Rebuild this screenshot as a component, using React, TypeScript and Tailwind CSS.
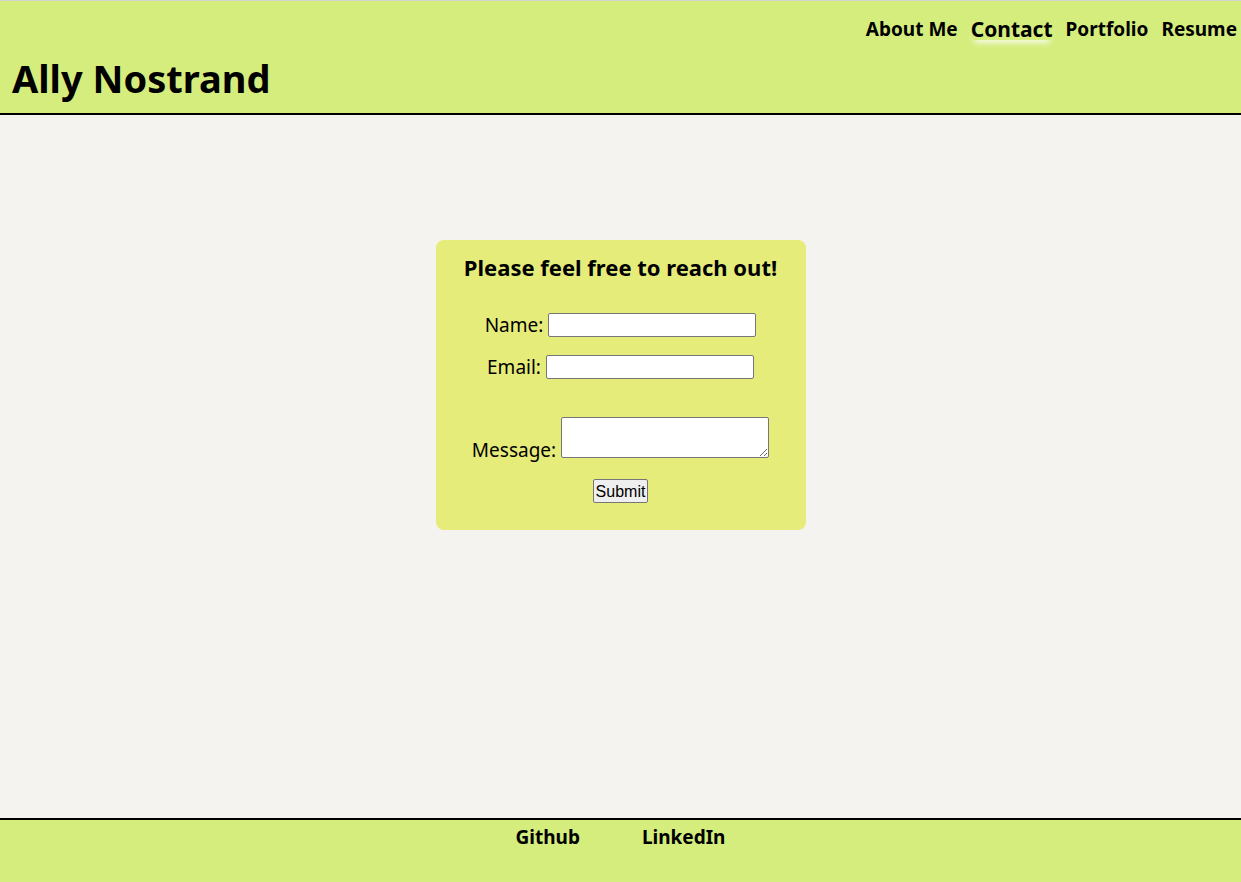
export default function App() {
    const font = { fontFamily: '"Noto Sans", "Open Sans", sans-serif' };
    return (
        <div style={font} className="min-h-screen flex flex-col bg-[#f4f3ef] text-black">
            <header className="border-t border-[#d3d3d3] bg-[#d4ed7c] border-b-2 border-b-black h-[115px] flex flex-col">
                <nav className="flex justify-end items-center gap-[13px] pr-[4px] pt-[18px] text-[19px] font-bold leading-none">
                    <a href="#about">About Me</a>
                    <a href="#contact" className="text-[21px] rounded-sm shadow-[0_6px_6px_-3px_rgba(255,255,255,0.8)]">
                        Contact
                    </a>
                    <a href="#portfolio">Portfolio</a>
                    <a href="#resume">Resume</a>
                </nav>
                <h1 className="text-[38px] font-bold leading-none pl-[12px] mt-[19px]">Ally Nostrand</h1>
            </header>

            <main className="flex-1 flex justify-center items-start pt-[125px]">
                <form className="w-[370px] h-[290px] bg-[#e6ec7a] rounded-lg flex flex-col items-center pt-[16px] text-[19px]">
                    <h2 className="text-[22px] font-bold leading-none mb-[33px]">Please feel free to reach out!</h2>
                    <div className="flex items-baseline gap-[5px]">
                        <label htmlFor="name">Name:</label>
                        <input id="name" type="text" className="w-[208px] h-[24px] bg-white border border-[#767676] rounded-[2px]" />
                    </div>
                    <div className="flex items-baseline gap-[5px] mt-[13px]">
                        <label htmlFor="email">Email:</label>
                        <input id="email" type="email" className="w-[208px] h-[24px] bg-white border border-[#767676] rounded-[2px]" />
                    </div>
                    <div className="flex items-end gap-[5px] mt-[36px]">
                        <label htmlFor="message" className="leading-none mb-[-2px]">Message:</label>
                        <textarea id="message" className="w-[208px] h-[41px] bg-white border border-[#767676] rounded-[2px] resize" />
                    </div>
                    <button
                        type="button"
                        style={{ fontFamily: '"Liberation Sans", Arial, sans-serif' }}
                        className="mt-[21px] h-[24px] px-[2px] text-[16px] bg-[#efefef] border border-[#767676] rounded-[2px]"
                    >
                        Submit
                    </button>
                </form>
            </main>

            <footer className="h-[64px] bg-[#d4ed7c] border-t-2 border-black flex justify-center gap-[62px] pt-[8px] text-[19px] font-bold leading-none">
                <a href="#github">Github</a>
                <a href="#linkedin">LinkedIn</a>
            </footer>
        </div>
    );
}
